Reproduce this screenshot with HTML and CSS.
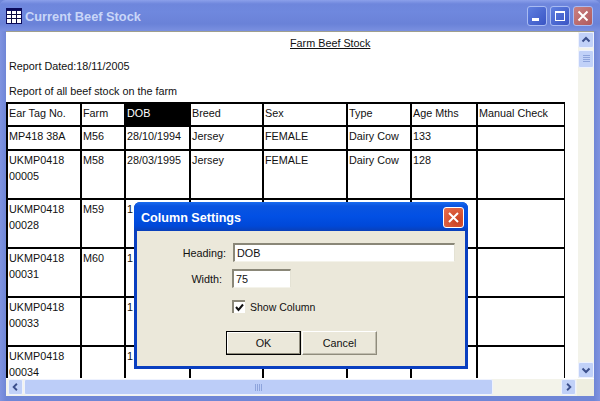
FILE: index.html
```
<!DOCTYPE html>
<html>
<head>
<meta charset="utf-8">
<title>Current Beef Stock</title>
<link rel="stylesheet" href="styles.css">
</head>
<body>
<div class="window">
  <div class="titlebar">
    <svg class="app-icon" width="16" height="16" viewBox="0 0 16 16"><rect width="16" height="16" fill="#0a0a5a"/><rect x="1" y="3" width="14" height="12" fill="#fff"/><path d="M1 6.5h14M1 10.5h14M5.5 3v12M10.5 3v12" stroke="#0a0a40" stroke-width="1"/></svg>
    <span class="title-text">Current Beef Stock</span>
    <div class="caption-btns">
      <div class="cap-btn cap-blue"><svg width="18" height="18" viewBox="0 0 18 18"><rect x="4" y="11" width="7" height="3" fill="#fff"/></svg></div>
      <div class="cap-btn cap-blue"><svg width="18" height="18" viewBox="0 0 18 18"><rect x="4.5" y="4.5" width="9" height="9" fill="none" stroke="#fff"/><rect x="4" y="4" width="10" height="2" fill="#fff"/></svg></div>
      <div class="cap-btn cap-red"><svg width="18" height="18" viewBox="0 0 18 18"><path d="M4.5 4.5l9 9M13.5 4.5l-9 9" stroke="#fff" stroke-width="2"/></svg></div>
    </div>
  </div>
  <div class="client">
    <div class="main-row">
      <div class="report">
        <div class="report-title">Farm Beef Stock</div>
        <div class="report-line date">Report Dated:18/11/2005</div>
        <div class="report-line desc">Report of all beef stock on the farm</div>
        <table class="stock">
          <colgroup><col class="c1"><col class="c2"><col class="c3"><col class="c4"><col class="c5"><col class="c6"><col class="c7"><col class="c8"></colgroup>
          <tr class="r-head"><td>Ear Tag No.</td><td>Farm</td><td class="sel">DOB</td><td>Breed</td><td>Sex</td><td>Type</td><td>Age Mths</td><td>Manual Check</td></tr>
          <tr class="r-one"><td>MP418 38A</td><td>M56</td><td>28/10/1994</td><td>Jersey</td><td>FEMALE</td><td>Dairy Cow</td><td>133</td><td></td></tr>
          <tr class="r-two"><td>UKMP0418<br>00005</td><td>M58</td><td>28/03/1995</td><td>Jersey</td><td>FEMALE</td><td>Dairy Cow</td><td>128</td><td></td></tr>
          <tr class="r-two"><td>UKMP0418<br>00028</td><td>M59</td><td>1</td><td></td><td></td><td></td><td></td><td></td></tr>
          <tr class="r-two"><td>UKMP0418<br>00031</td><td>M60</td><td>1</td><td></td><td></td><td></td><td></td><td></td></tr>
          <tr class="r-two"><td>UKMP0418<br>00033</td><td></td><td>1</td><td></td><td></td><td></td><td></td><td></td></tr>
          <tr class="r-two"><td>UKMP0418<br>00034</td><td></td><td>1</td><td></td><td></td><td></td><td></td><td></td></tr>
        </table>
      </div>
      <div class="vscroll">
        <div class="sb-btn sb-v"><svg width="14" height="14" viewBox="0 0 14 14"><path d="M3.5 8.5L7 5l3.5 3.5" fill="none" stroke="#3b4f8c" stroke-width="2"/></svg></div>
        <div class="thumb-v"><svg width="7" height="8" viewBox="0 0 7 8"><path d="M0 .5h7M0 2.5h7M0 4.5h7M0 6.5h7" stroke="#8ea4dc"/></svg></div>
        <div class="track-fill"></div>
        <div class="sb-btn sb-v"><svg width="14" height="14" viewBox="0 0 14 14"><path d="M3.5 5.5L7 9l3.5-3.5" fill="none" stroke="#3b4f8c" stroke-width="2"/></svg></div>
      </div>
    </div>
    <div class="hscroll">
      <div class="sb-btn sb-h"><svg width="14" height="14" viewBox="0 0 14 14"><path d="M8.5 3.5L5 7l3.5 3.5" fill="none" stroke="#3b4f8c" stroke-width="2"/></svg></div>
      <div class="thumb-h"><svg width="8" height="7" viewBox="0 0 8 7"><path d="M.5 0v7M2.5 0v7M4.5 0v7M6.5 0v7" stroke="#8ea4dc"/></svg></div>
      <div class="track-fill"></div>
      <div class="sb-btn sb-h"><svg width="14" height="14" viewBox="0 0 14 14"><path d="M5.5 3.5L9 7l-3.5 3.5" fill="none" stroke="#3b4f8c" stroke-width="2"/></svg></div>
      <div class="grip"></div>
    </div>
  </div>
</div>

<div class="dialog">
  <div class="dlg-title">
    <span class="dlg-title-text">Column Settings</span>
    <div class="dlg-close"><svg width="19" height="19" viewBox="0 0 19 19"><path d="M5 5l9 9M14 5l-9 9" stroke="#fff" stroke-width="2"/></svg></div>
  </div>
  <div class="dlg-body">
    <div class="field">
      <label class="lbl">Heading:</label>
      <div class="input input-wide">DOB</div>
    </div>
    <div class="field field-width">
      <label class="lbl lbl-width">Width:</label>
      <div class="input input-small">75</div>
    </div>
    <div class="check-row">
      <div class="checkbox"><svg width="11" height="11" viewBox="0 0 11 11"><path d="M2 5l2.5 3L9 2.5" fill="none" stroke="#111" stroke-width="2"/></svg></div>
      <span class="check-label">Show Column</span>
    </div>
    <div class="buttons">
      <div class="btn btn-default">OK</div>
      <div class="btn">Cancel</div>
    </div>
  </div>
</div>
</body>
</html>
```
FILE: styles.css
```
* { box-sizing: border-box; }
html, body { margin: 0; padding: 0; }
body {
  width: 600px;
  height: 401px;
  overflow: hidden;
  position: relative;
  font-family: "Liberation Sans", Arial, sans-serif;
  font-size: 10.8px;
  color: #111;
  background: #6f86d8;
}
.window {
  width: 600px;
  height: 401px;
  display: flex;
  flex-direction: column;
  padding: 0 5px 5px;
  border-radius: 6px 6px 0 0;
  background: linear-gradient(90deg, #7f93e0 0, #6f86d6 6px, #6f86d6 594px, #7f93e0 100%);
}
.titlebar {
  height: 31px;
  margin: 0 -5px;
  padding: 1px 7px 0 6px;
  display: flex;
  align-items: center;
  flex: none;
  border-radius: 6px 6px 0 0;
  background: linear-gradient(180deg, #8ba0ea 0, #6e86dc 4px, #6f88de 12px, #6a82d8 24px, #7a90e0 31px);
}
.app-icon { flex: none; }
.title-text {
  margin-left: 3px;
  font-weight: bold;
  font-size: 12.8px;
  color: #c9d6f8;
}
.caption-btns { margin-left: auto; display: flex; gap: 3px; margin-top: -1px; }
.cap-btn {
  width: 20px;
  height: 20px;
  border: 1px solid #a9bbf2;
  border-radius: 3px;
  display: flex;
  align-items: center;
  justify-content: center;
}
.cap-blue { background: linear-gradient(135deg, #5f7fe0, #3a55c4); }
.cap-red { background: linear-gradient(135deg, #c98080, #b05a5e); }
.client {
  flex: 1;
  display: flex;
  flex-direction: column;
  min-height: 0;
  background: #fff;
  border-top: 1px solid #9f9f8e;
  margin: 0 1px;
}
.main-row { flex: 1; display: flex; min-height: 0; }
.report { flex: 1; min-width: 0; overflow: hidden; background: #fff; }
.report-title {
  height: 18px;
  margin-top: 5px;
  margin-left: 284px;
  line-height: 12px;
  text-decoration: underline;
}
.report-line { padding-left: 3px; line-height: 12px; }
.date { margin-top: 5px; }
.desc { margin-top: 13px; }
.stock {
  margin: 5px 0 0 0;
  border-collapse: collapse;
  table-layout: fixed;
  width: 557px;
}
.c1 { width: 74px; } .c2 { width: 44px; } .c3 { width: 65px; } .c4 { width: 73px; }
.c5 { width: 84px; } .c6 { width: 64px; } .c7 { width: 66px; } .c8 { width: 87px; }
.stock td {
  border: 2px solid #000;
  padding: 1px 1px 0 1px;
  vertical-align: top;
  line-height: 16px;
  white-space: nowrap;
  overflow: hidden;
}
.stock td:last-child { border-right-width: 1px; }
.r-head { height: 23px; }
.r-one { height: 24px; }
.r-two { height: 49px; }
.sel { background: #000; color: #fff; }
.vscroll {
  width: 16px;
  flex: none;
  display: flex;
  flex-direction: column;
  background: #f3f3ea;
}
.hscroll {
  height: 18px;
  flex: none;
  display: flex;
  align-items: flex-start;
  background: #f3f3ea;
  border-top: 1px solid #fff;
  padding-left: 2px;
}
.track-fill { flex: 1; }
.sb-btn {
  width: 16px;
  height: 16px;
  flex: none;
  display: flex;
  align-items: center;
  justify-content: center;
  background: #c1d1f8;
  border: 1px solid #eef2fe;
  border-radius: 2px;
}
.sb-h { width: 15px; }
.thumb-v {
  height: 18px;
  margin-top: 2px;
  flex: none;
  display: flex;
  align-items: center;
  justify-content: center;
  background: #c1d1f8;
  border: 1px solid #eef2fe;
  border-radius: 2px;
}
.thumb-h {
  width: 469px;
  height: 16px;
  margin-left: 1px;
  flex: none;
  display: flex;
  align-items: center;
  justify-content: center;
  background: #bccdf8;
  border: 1px solid #eef2fe;
  border-radius: 2px;
}
.grip { width: 17px; height: 17px; margin-left: 1px; flex: none; background: #eeeee0; }
.dialog {
  position: absolute;
  left: 134px;
  top: 202px;
  width: 334px;
  height: 167px;
  display: flex;
  flex-direction: column;
  border-radius: 6px 6px 0 0;
  background: #0a3fc0;
}
.dlg-title {
  height: 29px;
  padding: 1px 4px 0 7px;
  flex: none;
  display: flex;
  align-items: center;
  justify-content: space-between;
  color: #fff;
  font-weight: bold;
  font-size: 12.6px;
  border-radius: 6px 6px 0 0;
  background: linear-gradient(180deg, #1a6cf0 0, #0a54e0 4px, #0250e4 14px, #0048d8 24px, #0a40b8 29px);
}
.dlg-title-text { padding-top: 2px; }
.dlg-close {
  width: 21px;
  height: 21px;
  display: flex;
  align-items: center;
  justify-content: center;
  border: 1px solid #fff;
  border-radius: 3px;
  background: radial-gradient(circle at 70% 70%, #c84020, #e87050);
}
.dlg-body {
  flex: 1;
  margin: 0 3px 3px;
  padding: 12px 0 0;
  background: #ebe8da;
  display: flex;
  flex-direction: column;
}
.field { display: flex; align-items: center; height: 19px; }
.field-width { margin-top: 7px; }
.lbl { width: 89px; text-align: right; }
.lbl-width { padding-right: 4px; }
.input {
  height: 19px;
  margin-left: 7px;
  padding: 0 0 0 2px;
  line-height: 16px;
  background: #fff;
  border-top: 2px solid #8a8778;
  border-left: 2px solid #8a8778;
  border-right: 1px solid #e4e2d4;
  border-bottom: 1px solid #f4f3ea;
}
.input-wide { width: 222px; }
.input-small { width: 59px; margin-left: 6px; }
.check-row {
  display: flex;
  align-items: center;
  margin: 12px 0 0 95px;
  height: 13px;
  gap: 5px;
}
.check-label { font-size: 10.5px; }
.checkbox {
  width: 13px;
  height: 13px;
  display: flex;
  align-items: center;
  justify-content: center;
  background: #fff;
  border-top: 2px solid #8a8778;
  border-left: 2px solid #8a8778;
}
.buttons { display: flex; margin: 18px 0 0 89px; gap: 1px; }
.btn {
  width: 75px;
  height: 24px;
  display: flex;
  align-items: center;
  justify-content: center;
  background: #ebe8da;
  border: 1px solid #8f8c7c;
  border-top-color: #fff;
  border-left-color: #fff;
  box-shadow: inset -1px -1px 0 #c0bdae;
}
.btn-default { border: 1px solid #000; box-shadow: inset -1px -1px 0 #8f8c7c, inset 1px 1px 0 #fff; }
```
